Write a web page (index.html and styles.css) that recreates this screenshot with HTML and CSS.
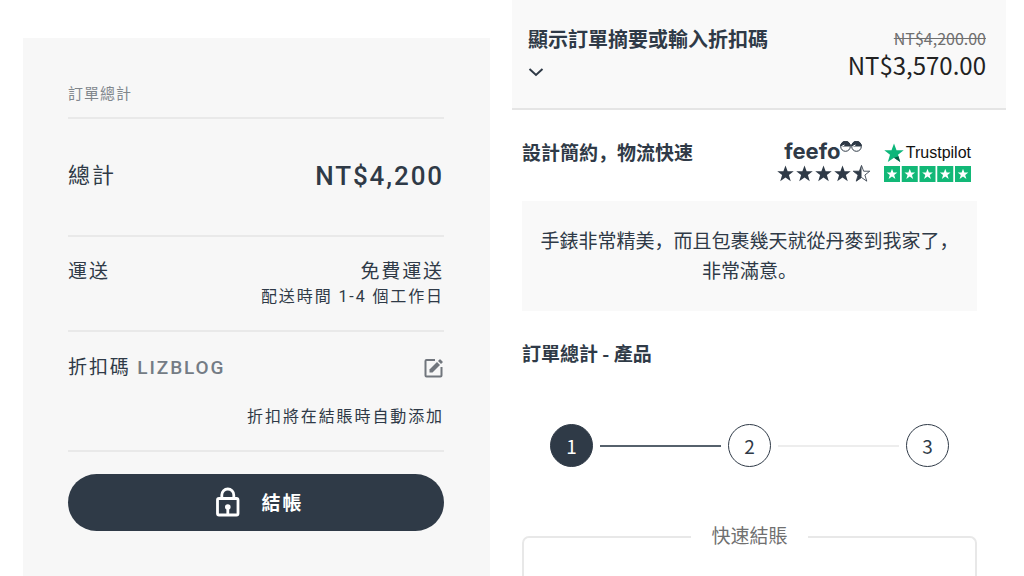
FILE: index.html
```html
<!DOCTYPE html>
<html lang="zh">
<head>
  <meta charset="utf-8">
  <meta name="viewport" content="width=device-width, initial-scale=1">
  <title>結帳</title>
  <link rel="stylesheet" href="styles.css">
</head>
<body>
  <svg width="0" height="0" class="symbols" aria-hidden="true">
    <symbol id="star" viewBox="0 0 20 20">
      <path d="M10 0.500l2.500 6.800h7.200l-5.700 4.500 2.200 7.200-6.200-4.300-6.200 4.300 2.200-7.200L0.300 7.300h7.200z"/>
    </symbol>
  </svg>

  <div class="layout">
    <section class="cart">
      <div class="cart-panel">
        <h2 class="cart-title">訂單總計</h2>

        <div class="row total">
          <span class="total-label">總計</span>
          <strong class="total-price">NT$4,200</strong>
        </div>

        <div class="row shipping">
          <span>運送</span>
          <div class="right">
            <div>免費運送</div>
            <div class="note">配送時間 1-4 個工作日</div>
          </div>
        </div>

        <div class="promo">
          <div class="row promo-line">
            <div>折扣碼 <strong class="code">LIZBLOG</strong></div>
            <button class="edit" type="button" aria-label="編輯">
              <svg width="20" height="20" viewBox="0 0 20 20" fill="none" stroke="#71767d" stroke-width="2">
                <path d="M11 2H2.500Q1.500 2 1.500 3V17.500Q1.500 18.500 2.500 18.500H16.500Q17.500 18.500 17.500 17.500V9"/>
                <path d="M5.500 14.500V11.500L13 4L16 7L8.500 14.500Z" fill="#71767d" stroke="none"/>
                <path d="M14 3L15.500 1.500Q16 1 16.500 1.500L18.500 3.500Q19 4 18.500 4.500L17 6Z" fill="#71767d" stroke="none"/>
              </svg>
            </button>
          </div>
          <div class="note right">折扣將在結賬時自動添加</div>
        </div>

        <button class="checkout" type="button">
          <svg width="26" height="30" viewBox="0 0 26 30" fill="none" stroke="#fff" stroke-width="2.800">
            <rect x="2.500" y="11.500" width="20.500" height="16.500" rx="1.500"/>
            <path d="M6.800 11.500V8a6 6 0 0 1 12 0v3.500"/>
            <circle cx="12.800" cy="20" r="2.800" fill="#fff" stroke="none"/>
            <path d="M12.800 20v7"/>
          </svg>
          結帳
        </button>
      </div>
    </section>

    <section class="order">
      <header class="summary">
        <button class="summary-toggle" type="button">
          顯示訂單摘要或輸入折扣碼
          <svg width="16" height="10" viewBox="0 0 16 10" fill="none" stroke="#2f3a47" stroke-width="2">
            <path d="M1.500 2L8 8L14.500 2"/>
          </svg>
        </button>
        <div class="prices">
          <del>NT$4,200.00</del>
          <span class="price">NT$3,570.00</span>
        </div>
      </header>

      <div class="content">
        <div class="trust">
          <h3>設計簡約，物流快速</h3>
          <div class="badges">
            <div class="feefo">
              <div class="feefo-name">
                <span>feefo</span>
                <svg width="22" height="11" viewBox="0 0 22 11" stroke="#2f3a47">
                  <circle cx="5.500" cy="5.500" r="4.800" fill="#fff"/>
                  <path d="M.700 5a4.800 4.800 0 0 1 9.600 0z" fill="#2f3a47"/>
                  <circle cx="16.500" cy="5.500" r="4.800" fill="#fff"/>
                  <path d="M11.700 5a4.800 4.800 0 0 1 9.600 0z" fill="#2f3a47"/>
                  <path d="M1.500 5.500l3-1.500M12.500 5.500l3-1.500" stroke="#fff"/>
                </svg>
              </div>
              <svg width="93" height="18" viewBox="0 0 93 18" fill="#2f3a47">
                <use href="#star" x="0" y="0" width="17" height="17"/>
                <use href="#star" x="19" y="0" width="17" height="17"/>
                <use href="#star" x="38" y="0" width="17" height="17"/>
                <use href="#star" x="57" y="0" width="17" height="17"/>
                <use href="#star" x="76" y="0" width="17" height="17" fill="#fff" stroke="#2f3a47"/>
                <path d="M84.500 .400L82.400 6.200h-6.100l4.900 3.800-1.900 6.200 5.200-3.700z"/>
              </svg>
            </div>
            <div class="trustpilot">
              <div class="trustpilot-name">
                <svg width="20" height="20" viewBox="0 0 20 20">
                  <use href="#star" width="20" height="20" fill="#0cb67a"/>
                  <path d="M14.500 13.200l-4.500 1.500 6.200 4.300z" fill="#075c46"/>
                </svg>
                <span>Trustpilot</span>
              </div>
              <svg width="87" height="16" viewBox="0 0 87 16" fill="#fff">
                <path d="M0 0h16v16H0zM17.750 0h16v16h-16zM35.500 0h16v16h-16zM53.250 0h16v16h-16zM71 0h16v16H71z" fill="#12b877"/>
                <use href="#star" x="2.500" y="2.500" width="11" height="11"/>
                <use href="#star" x="20.250" y="2.500" width="11" height="11"/>
                <use href="#star" x="38" y="2.500" width="11" height="11"/>
                <use href="#star" x="55.750" y="2.500" width="11" height="11"/>
                <use href="#star" x="73.500" y="2.500" width="11" height="11"/>
              </svg>
            </div>
          </div>
        </div>

        <p class="review">手錶非常精美，而且包裹幾天就從丹麥到我家了，非常滿意。</p>

        <h3>訂單總計 - 產品</h3>

        <div class="steps">
          <span class="step active">1</span>
          <span class="line done"></span>
          <span class="step">2</span>
          <span class="line"></span>
          <span class="step">3</span>
        </div>

        <fieldset class="express">
          <legend>快速結賬</legend>
        </fieldset>
      </div>
    </section>
  </div>
</body>
</html>
```

FILE: styles.css
```css
* {
  box-sizing: border-box;
}
body {
  margin: 0;
  background: #fff;
  color: #2f3a47;
  font-family: "Noto Sans CJK SC", sans-serif;
  font-size: 19px;
}
h2, h3, p {
  margin: 0;
}
button {
  padding: 0;
  border: none;
  background: none;
  color: inherit;
  font-family: inherit;
  cursor: pointer;
}
svg {
  display: block;
  flex: none;
}
.symbols {
  position: absolute;
}
.layout {
  display: grid;
  grid-template-columns: 1fr 1fr;
  min-height: 100vh;
}

/* cart */
.cart {
  display: flex;
  padding: 38px 22px 0 23px;
}
.cart-panel {
  flex: 1;
  padding: 44px 46px 44px 45px;
  background: #f7f7f7;
  font-family: Roboto, "Noto Sans CJK SC", sans-serif;
  line-height: 26px;
  letter-spacing: 0.1em;
}
.cart-title {
  padding-bottom: 11px;
  border-bottom: 2px solid #e9e9e9;
  color: #80868c;
  font-size: 15px;
  font-weight: 400;
  line-height: 24px;
  letter-spacing: 1px;
}
.row {
  display: flex;
  justify-content: space-between;
}
.total {
  align-items: center;
  padding: 41px 0 43px;
  border-bottom: 2px solid #e9e9e9;
  line-height: 32px;
}
.total-label {
  font-size: 22px;
}
.total-price {
  font-size: 26px;
  font-weight: 500;
}
.shipping {
  padding: 22px 0 21px;
  border-bottom: 2px solid #e9e9e9;
}
.right {
  text-align: right;
}
.note {
  font-size: 16px;
  line-height: 24px;
}
.promo {
  padding: 23px 0 21px;
  border-bottom: 2px solid #e9e9e9;
}
.promo-line {
  align-items: center;
  margin-bottom: 24px;
}
.code {
  color: #747c85;
  font-size: 19px;
  font-weight: 500;
}
.checkout {
  display: flex;
  align-items: center;
  justify-content: center;
  gap: 21px;
  width: 100%;
  height: 57px;
  margin-top: 22px;
  padding: 0 0 2px 6px;
  border-radius: 29px;
  background: #2f3a47;
  color: #fff;
  font-size: 19px;
  font-weight: 700;
  letter-spacing: 0.1em;
}

/* order */
.order {
  display: flex;
  flex-direction: column;
  padding-right: 18px;
}
.summary {
  display: flex;
  align-items: flex-start;
  justify-content: space-between;
  padding: 24px 20px 30px 16px;
  border-bottom: 2px solid #e5e5e5;
  background: #f9f9f9;
}
.summary-toggle {
  display: flex;
  flex-direction: column;
  gap: 13px;
  font-size: 20px;
  font-weight: 700;
  line-height: 30px;
}
.prices {
  display: flex;
  flex-direction: column;
  color: #222;
  text-align: right;
}
.prices del {
  color: #707070;
  font-size: 16px;
  line-height: 28px;
}
.price {
  font-size: 24px;
  line-height: 26px;
}
.content {
  display: flex;
  flex: 1;
  flex-direction: column;
  padding: 28px 29px 0 10px;
}
h3 {
  font-size: 19px;
  line-height: 28px;
}
.trust {
  display: flex;
  justify-content: space-between;
  margin-bottom: 18px;
}
.badges {
  display: flex;
  gap: 14px;
  padding-right: 6px;
}
.feefo-name {
  display: flex;
  justify-content: center;
  height: 27px;
  font-family: Inter, sans-serif;
  font-size: 22px;
  font-weight: 700;
  line-height: 26px;
}
.feefo-name svg {
  margin-top: 3px;
}
.trustpilot-name {
  display: flex;
  align-items: center;
  gap: 2px;
  height: 28px;
  padding-top: 2px;
  color: #111;
  font-family: "Liberation Sans", Arial, sans-serif;
  font-size: 16px;
}
.review {
  margin-bottom: 28px;
  padding: 24px 18px 26px;
  background: #f9f9f9;
  line-height: 30px;
  text-align: center;
}
.steps {
  display: flex;
  align-items: center;
  gap: 7px;
  margin: 57px 0 54px;
  padding: 0 28px;
}
.step {
  display: flex;
  align-items: center;
  justify-content: center;
  width: 43px;
  height: 43px;
  border: 1px solid #2f3a47;
  border-radius: 50%;
}
.active {
  background: #2f3a47;
  color: #fff;
}
.line {
  flex: 1;
  height: 2px;
  background: #ededed;
}
.done {
  background: #56616c;
}
.express {
  flex: 1;
  margin: 0;
  border: 2px solid #e8e8e8;
  border-bottom: none;
  border-radius: 7px 7px 0 0;
}
.express legend {
  margin: 0 auto;
  padding: 0 20px 4px;
  color: #707070;
  line-height: 28px;
}
```
